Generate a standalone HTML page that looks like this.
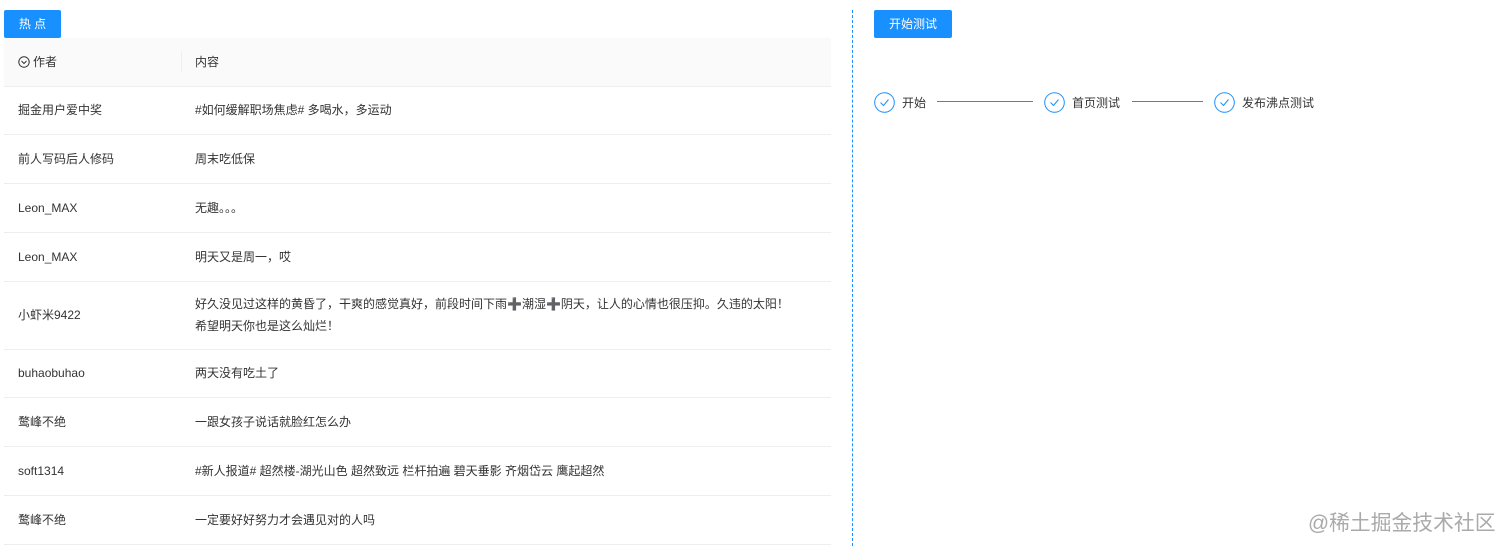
<!DOCTYPE html>
<html><head><meta charset="utf-8"><style>
*{margin:0;padding:0;box-sizing:border-box}
body{width:1512px;height:546px;background:#fff;font-family:"Liberation Sans","Noto Sans CJK SC",sans-serif;font-size:12px;color:#333;position:relative;overflow:hidden}
.btn{position:absolute;background:#1890ff;color:#fff;border-radius:2px;height:28px;line-height:28px;text-align:center;font-size:12px}
table{position:absolute;left:4px;top:38px;width:827px;border-collapse:collapse}
th{background:#fafafa;height:48px;text-align:left;font-weight:normal;color:#333;border-bottom:1px solid #eee;padding-left:14px;position:relative}
td{border-bottom:1px solid #eee;height:48.75px;padding-left:14px;line-height:22px}
th.c1,td.c1{width:177px}
th.c2:before{content:"";position:absolute;left:0;top:14px;height:20px;border-left:1px solid #eee}
.step{position:absolute;top:91px;display:flex;align-items:center;height:22px}
.step span{margin-left:7px;color:#333}
.line{position:absolute;top:101px;height:1px;background:#1890ff}
</style></head><body>
<div class="btn" style="left:4px;top:10px;width:57px">热 点</div>
<table>
<tr><th class="c1"><svg width="12" height="12" viewBox="0 0 12 12" style="vertical-align:-2px;margin-right:3px"><circle cx="6" cy="6" r="5.2" fill="none" stroke="#333" stroke-width="1"/><path d="M3.5 5l2.5 2.5 2.5-2.5" fill="none" stroke="#333" stroke-width="1"/></svg>作者</th><th class="c2">内容</th></tr>
<tr><td class="c1">掘金用户爱中奖</td><td>#如何缓解职场焦虑# 多喝水，多运动</td></tr>
<tr><td class="c1">前人写码后人修码</td><td>周末吃低保</td></tr>
<tr><td class="c1">Leon_MAX</td><td>无趣。。。</td></tr>
<tr><td class="c1">Leon_MAX</td><td>明天又是周一，哎</td></tr>
<tr><td class="c1" style="height:68px">小虾米9422</td><td>好久没见过这样的黄昏了，干爽的感觉真好，前段时间下雨➕潮湿➕阴天，让人的心情也很压抑。久违的太阳！<br>希望明天你也是这么灿烂！</td></tr>
<tr><td class="c1">buhaobuhao</td><td>两天没有吃土了</td></tr>
<tr><td class="c1">鹜峰不绝</td><td>一跟女孩子说话就脸红怎么办</td></tr>
<tr><td class="c1">soft1314</td><td>#新人报道# 超然楼-湖光山色 超然致远 栏杆拍遍 碧天垂影 齐烟岱云 鹰起超然</td></tr>
<tr><td class="c1">鹜峰不绝</td><td>一定要好好努力才会遇见对的人吗</td></tr>
</table>
<div style="position:absolute;left:852px;top:10px;height:536px;border-left:1px dashed #1890ff"></div>
<div class="btn" style="left:874px;top:10px;width:78px">开始测试</div>
<div class="step" style="left:874px"><svg width="21" height="21" viewBox="0 0 21 21"><circle cx="10.5" cy="10.5" r="9.8" fill="none" stroke="#1890ff" stroke-width="1"/><path d="M6.5 10.5l3 3 5-6" fill="none" stroke="#1890ff" stroke-width="1"/></svg><span>开始</span></div>
<div class="line" style="left:937px;width:96px"></div>
<div class="step" style="left:1044px"><svg width="21" height="21" viewBox="0 0 21 21"><circle cx="10.5" cy="10.5" r="9.8" fill="none" stroke="#1890ff" stroke-width="1"/><path d="M6.5 10.5l3 3 5-6" fill="none" stroke="#1890ff" stroke-width="1"/></svg><span>首页测试</span></div>
<div class="line" style="left:1132px;width:71px"></div>
<div class="step" style="left:1214px"><svg width="21" height="21" viewBox="0 0 21 21"><circle cx="10.5" cy="10.5" r="9.8" fill="none" stroke="#1890ff" stroke-width="1"/><path d="M6.5 10.5l3 3 5-6" fill="none" stroke="#1890ff" stroke-width="1"/></svg><span>发布沸点测试</span></div>
<div style="position:absolute;left:1308px;top:506px;font-size:20.8px;color:#aaa">@稀土掘金技术社区</div>
</body></html>
